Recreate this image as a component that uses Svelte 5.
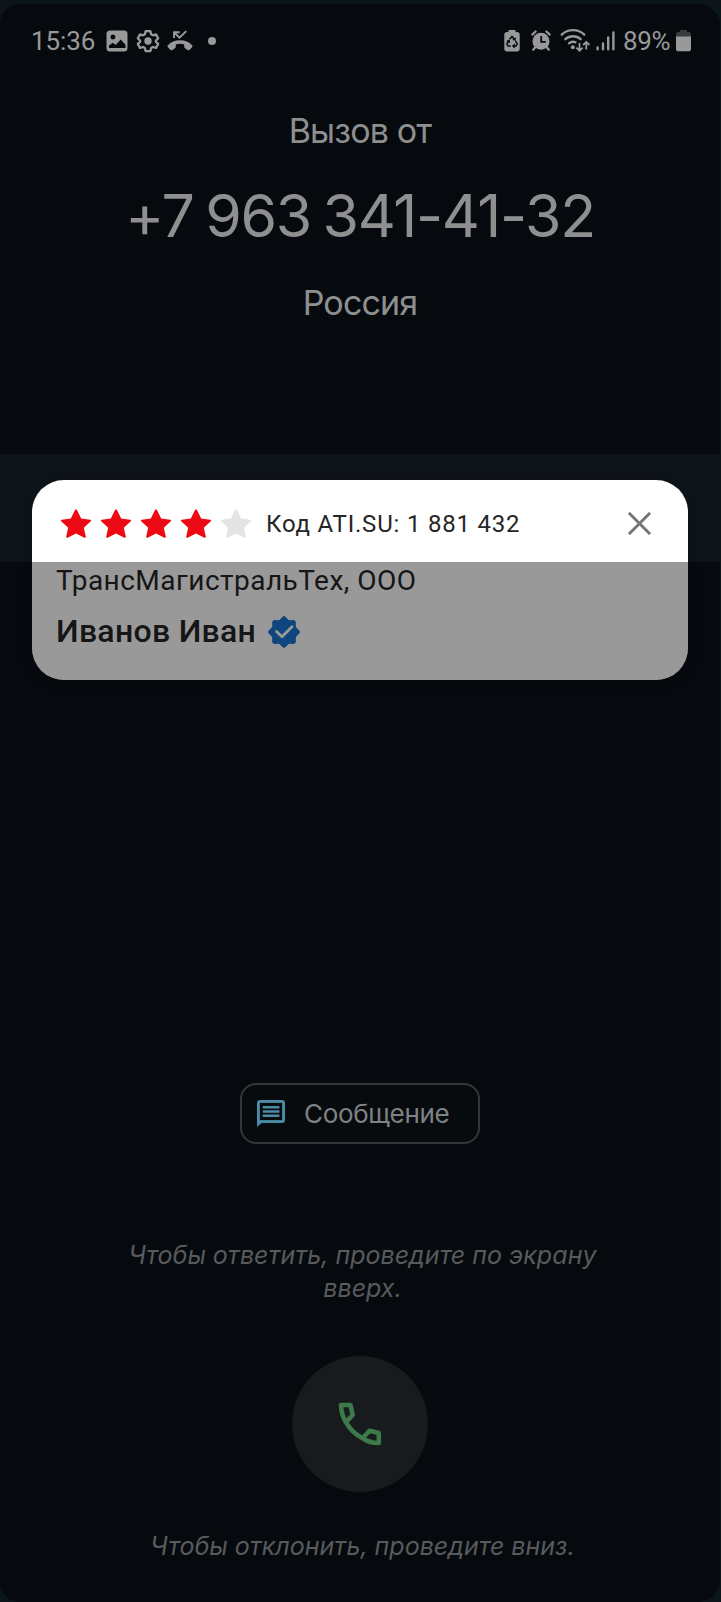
<script>
  const stars = [true, true, true, true, false];
  const lobes = [0, 45, 90, 135, 180, 225, 270, 315];
</script>

<main class="page">
  <div class="screen">
    <header class="status">
      <div class="status-group">
        <span class="clock">15:36</span>
        <svg class="ic-image" width="22" height="22" viewBox="0 0 22 22">
          <path fill="#999" fill-rule="evenodd" d="M4 .5h14A3.5 3.5 0 0 1 21.5 4v14a3.500 3.500 0 0 1-3.500 3.500H4A3.500 3.500 0 0 1 .5 18V4A3.500 3.500 0 0 1 4 .5zM7 4.500a2.500 2.500 0 1 0 0 5 2.500 2.500 0 0 0 0-5zM3 18h16.500v-3.200l-4.800-5.300-5 5.500-2.900-2.300L3 15.500z" />
        </svg>
        <svg class="ic-gear" width="24" height="24" viewBox="0 0 24 24">
          <path fill="none" stroke="#999" stroke-width="2.300" stroke-linejoin="round" d="M9.600 2.200h4.800l.7 3 1.900 1.100 3-.9 2.200 4-2.300 2.100v1.300l2.300 2.100-2.200 4-3-.9-1.900 1.100-.7 3H9.600l-.7-3L7 18l-3 .9-2.200-4 2.300-2.100v-1.300L1.800 9.400l2.200-4 3 .9 1.900-1.100z" />
          <circle cx="12" cy="12" r="3.700" fill="#999" />
        </svg>
        <svg class="ic-missed" width="26" height="22" viewBox="0 0 27 22">
          <path fill="#999" d="M13.500 10.300c-5.200 0-9.600 1.800-12.500 5-.7.800-.6 1.500 0 2.200l2.300 2.500c.7.700 1.500.8 2.300.3l2.700-1.900c.6-.4.8-.9.800-1.600v-2.200a15 15 0 0 1 8.800 0v2.200c0 .7.200 1.200.8 1.600l2.700 1.900c.8.5 1.600.4 2.300-.3l2.300-2.500c.6-.7.7-1.400 0-2.200-2.900-3.200-7.300-5-12.500-5z" />
          <path fill="none" stroke="#999" stroke-width="2" d="M7.300 7.800V2h5.900M7.500 2.200l5.500 5.300L20 .8" />
        </svg>
        <span class="dot"></span>
      </div>
      <div class="status-group">
        <svg width="16" height="22" viewBox="0 0 16 22">
          <path fill="#999" d="M4.500 0h7v2H13a2.700 2.700 0 0 1 2.700 2.700v14A2.700 2.700 0 0 1 13 21.400H3a2.700 2.700 0 0 1-2.700-2.700v-14A2.700 2.700 0 0 1 3 2h1.500z" />
          <path fill="none" stroke="#080b0f" stroke-width="1.500" d="M5.600 9.300 8 6.500l2.400 2.800M11.300 10.600l2 3.500-1.200 1.900H9.200M6.800 16H4l-1.200-1.900 2-3.500M10.700 14.200 9 16l1.700 1.700M3 11.300l2-.7.5 2.200M8.800 9.500l2 .2.500-2" />
        </svg>
        <svg class="ic-alarm" width="20" height="21" viewBox="0 0 20 21">
          <circle cx="10" cy="11.200" r="8.500" fill="#999" />
          <path fill="none" stroke="#999" stroke-width="2.200" stroke-linecap="round" d="M1.300 4.600 4.600 1.500M18.700 4.600l-3.300-3.100M4.200 17.300l-2 2.400M15.800 17.300l2 2.400" />
          <path fill="none" stroke="#080b0f" stroke-width="1.800" d="M10.200 6v5.800h4.600" />
        </svg>
        <svg class="ic-wifi" width="31" height="23" viewBox="0 0 31 23">
          <g fill="none" stroke="#999" stroke-width="2.300" stroke-linecap="round">
            <path d="M1.700 5.700a16.500 16.500 0 0 1 22.600 0M5.300 10.200a11.500 11.500 0 0 1 15.400 0M9 14.300a6.200 6.200 0 0 1 6.500-1" />
          </g>
          <circle cx="12.800" cy="18.300" r="2" fill="#999" />
          <path fill="none" stroke="#999" stroke-width="1.800" d="M19.500 14v7.500M16.300 18.700l3.200 3 3.200-3M26.300 20.500V13M23.100 16l3.200-3 3.200 3" />
        </svg>
        <svg class="ic-signal" width="19" height="20" viewBox="0 0 19 20">
          <path fill="none" stroke="#999" stroke-width="2.400" stroke-linecap="round" d="M1.600 16.500v1.800M7 12.500v5.800M12.200 6.500v11.800M17.400 1.500v16.800" />
        </svg>
        <span class="percent">89%</span>
        <svg class="ic-battery" width="15" height="22" viewBox="0 0 15 22">
          <path fill="#393c3f" d="M4 0h7v2h1.500A2.500 2.500 0 0 1 15 4.500V7H0V4.500A2.500 2.500 0 0 1 2.500 2H4z" />
          <path fill="#999" d="M0 6.500h15v12.200a2.600 2.600 0 0 1-2.600 2.600H2.600A2.600 2.600 0 0 1 0 18.700z" />
        </svg>
      </div>
    </header>

    <section class="caller">
      <p class="from">Вызов от</p>
      <h1>+7 963 341-41-32</h1>
      <p class="country">Россия</p>
    </section>

    <section class="overlay">
      <article class="card">
        <div class="card-head">
          <div class="stars">
            {#each stars as on}
              <svg class:on width="30" height="29" viewBox="0 0 30 29">
                <path d="M14 1q1-1.700 2 0l4.200 8.600 9 1.200q1.500.4.400 1.600l-6.800 6.300 2 8.800q.1 1.800-1.400 1.200L15 24.500l-8.400 4.200q-1.500.6-1.400-1.200l2-8.800L.4 12.400Q-.7 11.200.8 10.800l9-1.200z" />
              </svg>
            {/each}
          </div>
          <span class="code">Код ATI.SU: 1 881 432</span>
          <svg class="close" width="23" height="23" viewBox="0 0 23 23">
            <path fill="none" stroke="#757575" stroke-width="2.900" d="m.9.900 21.200 21.200M22.100.9.900 22.100" />
          </svg>
        </div>
        <div class="company">ТрансМагистральТех, ООО</div>
        <div class="person">
          <span>Иванов Иван</span>
          <svg width="32" height="32" viewBox="0 0 32 32">
            <g fill="#1976d2">
              <circle cx="16" cy="16" r="12.700" />
              {#each lobes as angle}
                <path transform="rotate({angle} 16 16)" d="M10 5.500 14.300.9q1.700-1.600 3.400 0L22 5.500z" />
              {/each}
            </g>
            <path fill="none" stroke="#fff" stroke-width="2.800" stroke-linecap="round" stroke-linejoin="round" d="m8.500 15.500 5.500 5.300L24 10.800" />
          </svg>
        </div>
        <div class="shade"></div>
      </article>
    </section>

    <section class="actions">
      <button class="message">
        <svg width="28" height="28" viewBox="0 0 28 28">
          <path fill="#4c8ba5" d="M0 27V3Q0 0 3 0h22q3 0 3 3v17q0 3-3 3H4.500z" />
          <path fill="#080b0e" d="M2.900 2.900h22.200v17.200H2.900z" />
          <path fill="none" stroke="#4c8ba5" stroke-width="2.500" d="M5.700 7.200h16.700M5.700 11.500h16.700M5.700 15.800h16.700" />
        </svg>
        <span>Сообщение</span>
      </button>
      <p class="hint answer">Чтобы ответить, проведите по экрану<br />вверх.</p>
      <div class="call">
        <svg width="44" height="44" viewBox="0 0 44 44">
          <path fill="none" stroke="#3c7a49" stroke-width="4.600" stroke-linejoin="round" d="M3 3h9.500l2.200 10-6.800 7.200Q3.200 12.500 3 3zM7.900 20.200Q14 31 24.500 36.200M24.500 36.200l7-7.500 9.300 2.300v10q-8.500.2-16.300-4.800z" />
        </svg>
      </div>
      <p class="hint decline">Чтобы отклонить, проведите вниз.</p>
    </section>
  </div>
</main>

<style>
  :global(body) {
    background: #0c151b;
  }
  .page {
    box-sizing: border-box;
    height: 1602px;
    padding: 4px 1px 0 0;
    background: #0c151a;
    overflow: hidden;
  }
  .screen {
    height: 1598px;
    border-radius: 20px 22px 22px 20px;
    background: #060a0e;
    font-family: Inter, sans-serif;
    color: #8f8f8f;
    display: flex;
    flex-direction: column;
  }
  p,
  h1 {
    margin: 0;
    white-space: nowrap;
    font-weight: 400;
  }
  .status {
    height: 74px;
    box-sizing: border-box;
    padding: 0 29px 1px 31px;
    display: flex;
    justify-content: space-between;
    align-items: center;
    font: 26px/30px Roboto, sans-serif;
    color: #999;
  }
  .status-group {
    display: flex;
    align-items: center;
  }
  .clock {
    width: 75px;
    letter-spacing: -0.1px;
  }
  .ic-gear {
    margin-left: 8px;
  }
  .ic-missed {
    margin-left: 7px;
  }
  .dot {
    width: 8px;
    height: 8px;
    margin-left: 15px;
    border-radius: 50%;
    background: #999;
  }
  .ic-alarm {
    margin-left: 11px;
  }
  .ic-wifi {
    margin-left: 9px;
  }
  .ic-signal {
    margin-left: 5px;
  }
  .percent {
    margin-left: 8px;
    width: 49px;
    letter-spacing: -0.3px;
  }
  .ic-battery {
    margin-left: 4px;
  }
  .caller {
    height: 376px;
    box-sizing: border-box;
    padding-top: 29px;
    display: flex;
    flex-direction: column;
    align-items: center;
    gap: 27px;
  }
  .from,
  .country {
    font-size: 34px;
    line-height: 47px;
    letter-spacing: -0.85px;
  }
  h1 {
    margin: -1px 0 1px;
    font-size: 59px;
    line-height: 71px;
    letter-spacing: -1.35px;
    word-spacing: -3.5px;
  }
  .overlay {
    padding: 26px 32px 0;
    background: linear-gradient(90deg, #0c151b, #0f131a 12%, #0f131a 88%, #0c151b) 0 0 / 100% 108px no-repeat;
  }
  .card {
    position: relative;
    height: 200px;
    box-sizing: border-box;
    padding: 20px 24px 0;
    border-radius: 32px;
    background: #fff;
    overflow: hidden;
    font-family: Roboto, sans-serif;
    color: #262626;
    box-shadow: 0 2px 12px rgba(0, 0, 0, 0.15);
  }
  .card-head {
    display: flex;
    align-items: center;
    height: 46px;
  }
  .stars {
    display: flex;
    gap: 10px;
    padding-left: 5px;
  }
  .stars svg {
    fill: #e4e4e4;
  }
  .stars svg.on {
    fill: #ee0a14;
  }
  .code {
    margin-left: 15px;
    padding-top: 1px;
    font-size: 24px;
    letter-spacing: 0.8px;
    white-space: nowrap;
  }
  .close {
    margin: 1px 13px 0 auto;
  }
  .company {
    height: 34px;
    margin-top: 18px;
    font-size: 28px;
    line-height: 34px;
    letter-spacing: 0.48px;
  }
  .person {
    display: flex;
    align-items: center;
    gap: 12px;
    height: 66px;
    font-size: 32px;
    font-weight: 500;
    letter-spacing: 0.3px;
  }
  .person svg {
    margin-top: 2px;
  }
  .shade {
    position: absolute;
    inset: 82px 0 0;
    background: rgba(0, 0, 0, 0.4);
  }
  .actions {
    display: flex;
    flex-direction: column;
    align-items: center;
    padding-top: 403px;
  }
  .message {
    box-sizing: border-box;
    width: 240px;
    height: 61px;
    padding: 0 0 0 15px;
    display: flex;
    align-items: center;
    gap: 19px;
    border: 2px solid #33373a;
    border-radius: 16px;
    background: #080b0e;
    color: #7f8183;
    font: 26px/32px Inter, sans-serif;
    letter-spacing: -0.3px;
  }
  .hint {
    margin-left: 5px;
    font-size: 25px;
    line-height: 33px;
    font-style: italic;
    text-align: center;
    color: #585a5c;
  }
  .answer {
    margin-top: 95px;
  }
  .call {
    width: 136px;
    height: 136px;
    margin-top: 51px;
    border-radius: 50%;
    background: #181b1d;
    display: grid;
    place-items: center;
  }
  .decline {
    margin-top: 38px;
  }
</style>
